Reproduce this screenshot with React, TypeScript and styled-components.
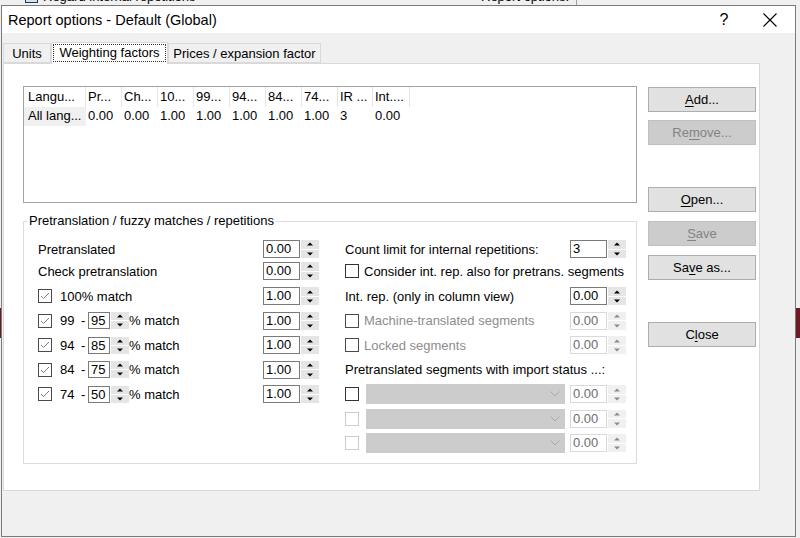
import React from "react"
import styled, { createGlobalStyle } from "styled-components"

const GlobalStyle = createGlobalStyle`
  html, body {
    margin: 0;
    padding: 0;
  }
  body {
    font-family: "Liberation Sans", Arial, sans-serif;
    font-size: 13px;
    color: #000;
    background: #f0f0f0;
  }
`

const Desktop = styled.div`
  position: relative;
  width: 800px;
  height: 538px;
  overflow: hidden;
  box-sizing: border-box;
  padding: 5px 0 0 1px;
  background: #f0f0f0;
`

// bits of the window behind the dialog that peek out at the edges
const BehindText = styled.div<{ $left: number }>`
  position: absolute;
  top: -11px;
  left: ${p => p.$left}px;
  display: flex;
  align-items: center;
  gap: 5px;
  white-space: nowrap;
`
const BehindCheck = styled.span`
  width: 13px;
  height: 13px;
  box-sizing: border-box;
  border: 1px solid #333;
  background: #cce4f7;
`
const BehindLine = styled.div`
  position: absolute;
  top: 0;
  left: 576px;
  width: 1px;
  height: 6px;
  background: #a0a0a0;
`
const BehindBar = styled.div<{ $top: number; $height: number }>`
  position: absolute;
  left: 0;
  right: 0;
  top: ${p => p.$top}px;
  height: ${p => p.$height}px;
  background: #6e1a25;
`

const Dialog = styled.div`
  position: relative;
  z-index: 1;
  width: 795px;
  height: 532px;
  box-sizing: border-box;
  border: 1px solid #7a7a7a;
  background: #f0f0f0;
  display: flex;
  flex-direction: column;
`
const TitleBar = styled.div`
  height: 27px;
  flex: none;
  background: #fff;
  display: flex;
  align-items: center;
  padding-left: 6px;
  padding-right: 2px;
`
const Title = styled.div`
  flex: 1;
  font-size: 14.5px;
  padding-top: 1px;
`
const CaptionButton = styled.div`
  width: 46px;
  height: 27px;
  display: flex;
  align-items: center;
  justify-content: center;
  font-size: 16px;
`

const Body = styled.div`
  flex: 1;
  padding: 9px 0 0 1px;
`
const TabRow = styled.div`
  display: flex;
  align-items: flex-end;
  height: 21px;
`
const Tab = styled.div<{ $w: number; $active?: boolean }>`
  position: relative;
  z-index: ${p => (p.$active ? 2 : 0)};
  width: ${p => p.$w}px;
  height: ${p => (p.$active ? 22 : 20)}px;
  margin-bottom: ${p => (p.$active ? -1 : 0)}px;
  box-sizing: border-box;
  border: 1px solid #d9d9d9;
  border-bottom: ${p => (p.$active ? "none" : "1px solid #d9d9d9")};
  background: ${p => (p.$active ? "#fff" : "#f0f0f0")};
  display: flex;
  align-items: ${p => (p.$active ? "stretch" : "center")};
  justify-content: center;
  padding: ${p => (p.$active ? "1px 1px 2px 1px" : "0")};
`
const FocusRect = styled.div`
  flex: 1;
  border: 1px dotted #333;
  display: flex;
  align-items: center;
  justify-content: center;
  padding-bottom: 1px;
`

const Panel = styled.div`
  width: 757px;
  height: 428px;
  box-sizing: border-box;
  border: 1px solid #d9d9d9;
  background: #fff;
  padding: 22px 3px 0 19px;
  display: flex;
  gap: 11px;
`
const MainCol = styled.div`
  width: 614px;
  display: flex;
  flex-direction: column;
`

const ListBox = styled.div`
  height: 117px;
  box-sizing: border-box;
  border: 1px solid #a3a3a3;
`
const ListRow = styled.div<{ $h: number }>`
  display: flex;
  height: ${p => p.$h}px;
`
const HeadCell = styled.div<{ $w: number; $pad: number }>`
  width: ${p => p.$w}px;
  flex: none;
  box-sizing: border-box;
  border-right: 1px solid #e5e5e5;
  padding-left: ${p => p.$pad}px;
  line-height: 20px;
  white-space: nowrap;
  overflow: hidden;
`
const DataCell = styled.div<{ $w: number; $pad: number; $selected?: boolean }>`
  width: ${p => p.$w}px;
  flex: none;
  box-sizing: border-box;
  padding-left: ${p => p.$pad}px;
  line-height: 18px;
  white-space: nowrap;
  overflow: hidden;
  background: ${p => (p.$selected ? "#f0f0f0" : "transparent")};
`

const Group = styled.div`
  position: relative;
  margin-top: 18px;
  height: 243px;
  box-sizing: border-box;
  border: 1px solid #dcdcdc;
  padding: 16px 10px 0 14px;
  display: flex;
  gap: 26px;
`
const GroupLabel = styled.div`
  position: absolute;
  top: -9px;
  left: 3px;
  padding: 0 2px;
  background: #fff;
  line-height: 16px;
`
const Col = styled.div`
  width: 281px;
  display: flex;
  flex-direction: column;
`
const Row = styled.div<{ $h: number; $mt?: number }>`
  display: flex;
  align-items: center;
  height: ${p => p.$h}px;
  margin-top: ${p => p.$mt ?? 0}px;
`
const Label = styled.span<{ $disabled?: boolean }>`
  flex: 1;
  white-space: nowrap;
  color: ${p => (p.$disabled ? "#8d8d8d" : "#000")};
`
const Text = styled.span<{ $w?: number }>`
  white-space: nowrap;
  ${p => (p.$w ? `width: ${p.$w}px; flex: none;` : "")}
`

const CheckBox = styled.span<{ $tone: "dark" | "mid" | "light"; $gap: number }>`
  width: 14px;
  height: 14px;
  flex: none;
  box-sizing: border-box;
  border: 1px solid
    ${p => (p.$tone === "dark" ? "#333" : p.$tone === "mid" ? "#4a4a4a" : "#cccccc")};
  background: #fff;
  margin-right: ${p => p.$gap}px;
  display: flex;
  align-items: center;
  justify-content: center;
`

const SpinWrap = styled.div`
  display: flex;
  gap: 1px;
  flex: none;
`
const SpinInput = styled.div<{ $w: number; $h: number; $disabled?: boolean }>`
  width: ${p => p.$w}px;
  height: ${p => p.$h}px;
  box-sizing: border-box;
  border: 1px solid ${p => (p.$disabled ? "#d9d9d9" : "#7a7a7a")};
  background: #fff;
  padding-left: 2px;
  line-height: ${p => p.$h - 2}px;
  color: ${p => (p.$disabled ? "#6d6d6d" : "#000")};
`
const SpinButtons = styled.div`
  width: 18px;
  display: flex;
  flex-direction: column;
  gap: 1px;
`
const SpinHalf = styled.div<{ $disabled?: boolean }>`
  flex: 1;
  background: ${p => (p.$disabled ? "#f0f0f0" : "#e5e5e5")};
  display: flex;
  align-items: center;
  justify-content: center;
`

const Combo = styled.div`
  width: 199px;
  height: 20px;
  flex: none;
  margin-right: 5px;
  background: #cccccc;
  display: flex;
  align-items: center;
  justify-content: flex-end;
  padding-right: 5px;
  box-sizing: border-box;
`

const ButtonCol = styled.div`
  width: 108px;
  display: flex;
  flex-direction: column;
`
const DialogButton = styled.div<{ $mt: number; $disabled?: boolean }>`
  height: 25px;
  margin-top: ${p => p.$mt}px;
  box-sizing: border-box;
  border: 1px solid ${p => (p.$disabled ? "#bfbfbf" : "#adadad")};
  background: ${p => (p.$disabled ? "#cccccc" : "#e1e1e1")};
  color: ${p => (p.$disabled ? "#838383" : "#000")};
  display: flex;
  align-items: center;
  justify-content: center;
  u {
    text-underline-offset: 2px;
  }
`

const Arrow = ({ up, disabled }: { up?: boolean; disabled?: boolean }) => (
  <svg width="6" height="4" viewBox="0 0 6 4">
    <polygon
      points={up ? "0,3.5 3,0.5 6,3.5" : "0,0.5 6,0.5 3,3.5"}
      fill={disabled ? "#8a8a8a" : "#000"}
    />
  </svg>
)

const Spin = ({
  value,
  w = 37,
  h = 18,
  disabled,
}: {
  value: string
  w?: number
  h?: number
  disabled?: boolean
}) => (
  <SpinWrap>
    <SpinInput $w={w} $h={h} $disabled={disabled}>
      {value}
    </SpinInput>
    <SpinButtons>
      <SpinHalf $disabled={disabled}>
        <Arrow up disabled={disabled} />
      </SpinHalf>
      <SpinHalf $disabled={disabled}>
        <Arrow disabled={disabled} />
      </SpinHalf>
    </SpinButtons>
  </SpinWrap>
)

const Check = ({
  checked,
  tone = "dark",
  gap = 6,
}: {
  checked?: boolean
  tone?: "dark" | "mid" | "light"
  gap?: number
}) => (
  <CheckBox $tone={tone} $gap={gap}>
    {checked && (
      <svg width="12" height="12" viewBox="0 0 12 12">
        <polyline points="2,6 4.5,8.5 10,3" fill="none" stroke="#7d7d7d" strokeWidth="1" />
      </svg>
    )}
  </CheckBox>
)

const columns = [
  { w: 62, head: "Langu...", val: "All lang..." },
  { w: 36, head: "Pr...", val: "0.00" },
  { w: 36, head: "Ch...", val: "0.00" },
  { w: 36, head: "10...", val: "1.00" },
  { w: 36, head: "99...", val: "1.00" },
  { w: 36, head: "94...", val: "1.00" },
  { w: 36, head: "84...", val: "1.00" },
  { w: 36, head: "74...", val: "1.00" },
  { w: 35, head: "IR ...", val: "3" },
  { w: 37, head: "Int....", val: "0.00" },
]

const fuzzyRows = [
  { from: "99", to: "95" },
  { from: "94", to: "85" },
  { from: "84", to: "75" },
  { from: "74", to: "50" },
]

const App: React.FC = () => {
  return (
    <Desktop>
      <GlobalStyle />
      <BehindText $left={25}>
        <BehindCheck />
        Regard internal repetitions
      </BehindText>
      <BehindText $left={481}>Report options:</BehindText>
      <BehindLine />
      <BehindBar $top={308} $height={30} />

      <Dialog>
        <TitleBar>
          <Title>Report options - Default (Global)</Title>
          <CaptionButton>?</CaptionButton>
          <CaptionButton>
            <svg width="14" height="14" viewBox="0 0 14 14">
              <path d="M0.5 0.5 L13.5 13.5 M13.5 0.5 L0.5 13.5" stroke="#000" strokeWidth="1.1" />
            </svg>
          </CaptionButton>
        </TitleBar>

        <Body>
          <TabRow>
            <Tab $w={48}>Units</Tab>
            <Tab $w={117} $active>
              <FocusRect>Weighting factors</FocusRect>
            </Tab>
            <Tab $w={153}>Prices / expansion factor</Tab>
          </TabRow>

          <Panel>
            <MainCol>
              <ListBox>
                <ListRow $h={20}>
                  {columns.map((c, i) => (
                    <HeadCell key={c.head} $w={c.w} $pad={i === 0 ? 4 : 2}>
                      {c.head}
                    </HeadCell>
                  ))}
                </ListRow>
                <ListRow $h={19}>
                  {columns.map((c, i) => (
                    <DataCell key={c.head} $w={c.w} $pad={i === 0 ? 4 : 2} $selected={i === 0}>
                      {c.val}
                    </DataCell>
                  ))}
                </ListRow>
              </ListBox>

              <Group>
                <GroupLabel>Pretranslation / fuzzy matches / repetitions</GroupLabel>

                <Col>
                  <Row $h={22}>
                    <Label>Pretranslated</Label>
                    <Spin value="0.00" />
                  </Row>
                  <Row $h={22}>
                    <Label>Check pretranslation</Label>
                    <Spin value="0.00" />
                  </Row>
                  <Row $h={24.5} $mt={2}>
                    <Check checked tone="mid" gap={8} />
                    <Label>100% match</Label>
                    <Spin value="1.00" />
                  </Row>
                  {fuzzyRows.map(r => (
                    <Row key={r.from} $h={24.5}>
                      <Check checked tone="mid" gap={8} />
                      <Text $w={21}>{r.from}</Text>
                      <Text $w={7}>-</Text>
                      <Spin value={r.to} w={22} h={17} />
                      <Label>% match</Label>
                      <Spin value="1.00" />
                    </Row>
                  ))}
                </Col>

                <Col>
                  <Row $h={22}>
                    <Label>Count limit for internal repetitions:</Label>
                    <Spin value="3" />
                  </Row>
                  <Row $h={22}>
                    <Check gap={5} />
                    <Label>Consider int. rep. also for pretrans. segments</Label>
                  </Row>
                  <Row $h={24.5} $mt={2}>
                    <Label>Int. rep. (only in column view)</Label>
                    <Spin value="0.00" />
                  </Row>
                  <Row $h={24.5}>
                    <Check tone="mid" gap={5} />
                    <Label $disabled>Machine-translated segments</Label>
                    <Spin value="0.00" disabled />
                  </Row>
                  <Row $h={24.5}>
                    <Check tone="mid" gap={5} />
                    <Label $disabled>Locked segments</Label>
                    <Spin value="0.00" disabled />
                  </Row>
                  <Row $h={24.5}>
                    <Label>Pretranslated segments with import status ...:</Label>
                  </Row>
                  {["dark", "light", "light"].map((tone, i) => (
                    <Row key={i} $h={24.5}>
                      <Check tone={tone as "dark" | "light"} gap={7} />
                      <Combo>
                        <svg width="10" height="6" viewBox="0 0 10 6">
                          <polyline points="0.5,0.5 5,5 9.5,0.5" fill="none" stroke="#a8a8a8" />
                        </svg>
                      </Combo>
                      <Spin value="0.00" disabled />
                    </Row>
                  ))}
                </Col>
              </Group>
            </MainCol>

            <ButtonCol>
              <DialogButton $mt={1}>
                <span><u>A</u>dd...</span>
              </DialogButton>
              <DialogButton $mt={8} $disabled>
                <span>Re<u>m</u>ove...</span>
              </DialogButton>
              <DialogButton $mt={42}>
                <span><u>O</u>pen...</span>
              </DialogButton>
              <DialogButton $mt={9} $disabled>
                <span><u>S</u>ave</span>
              </DialogButton>
              <DialogButton $mt={9}>
                <span>Sa<u>v</u>e as...</span>
              </DialogButton>
              <DialogButton $mt={42}>
                <span>C<u>l</u>ose</span>
              </DialogButton>
            </ButtonCol>
          </Panel>
        </Body>
      </Dialog>
    </Desktop>
  )
}

export default App
